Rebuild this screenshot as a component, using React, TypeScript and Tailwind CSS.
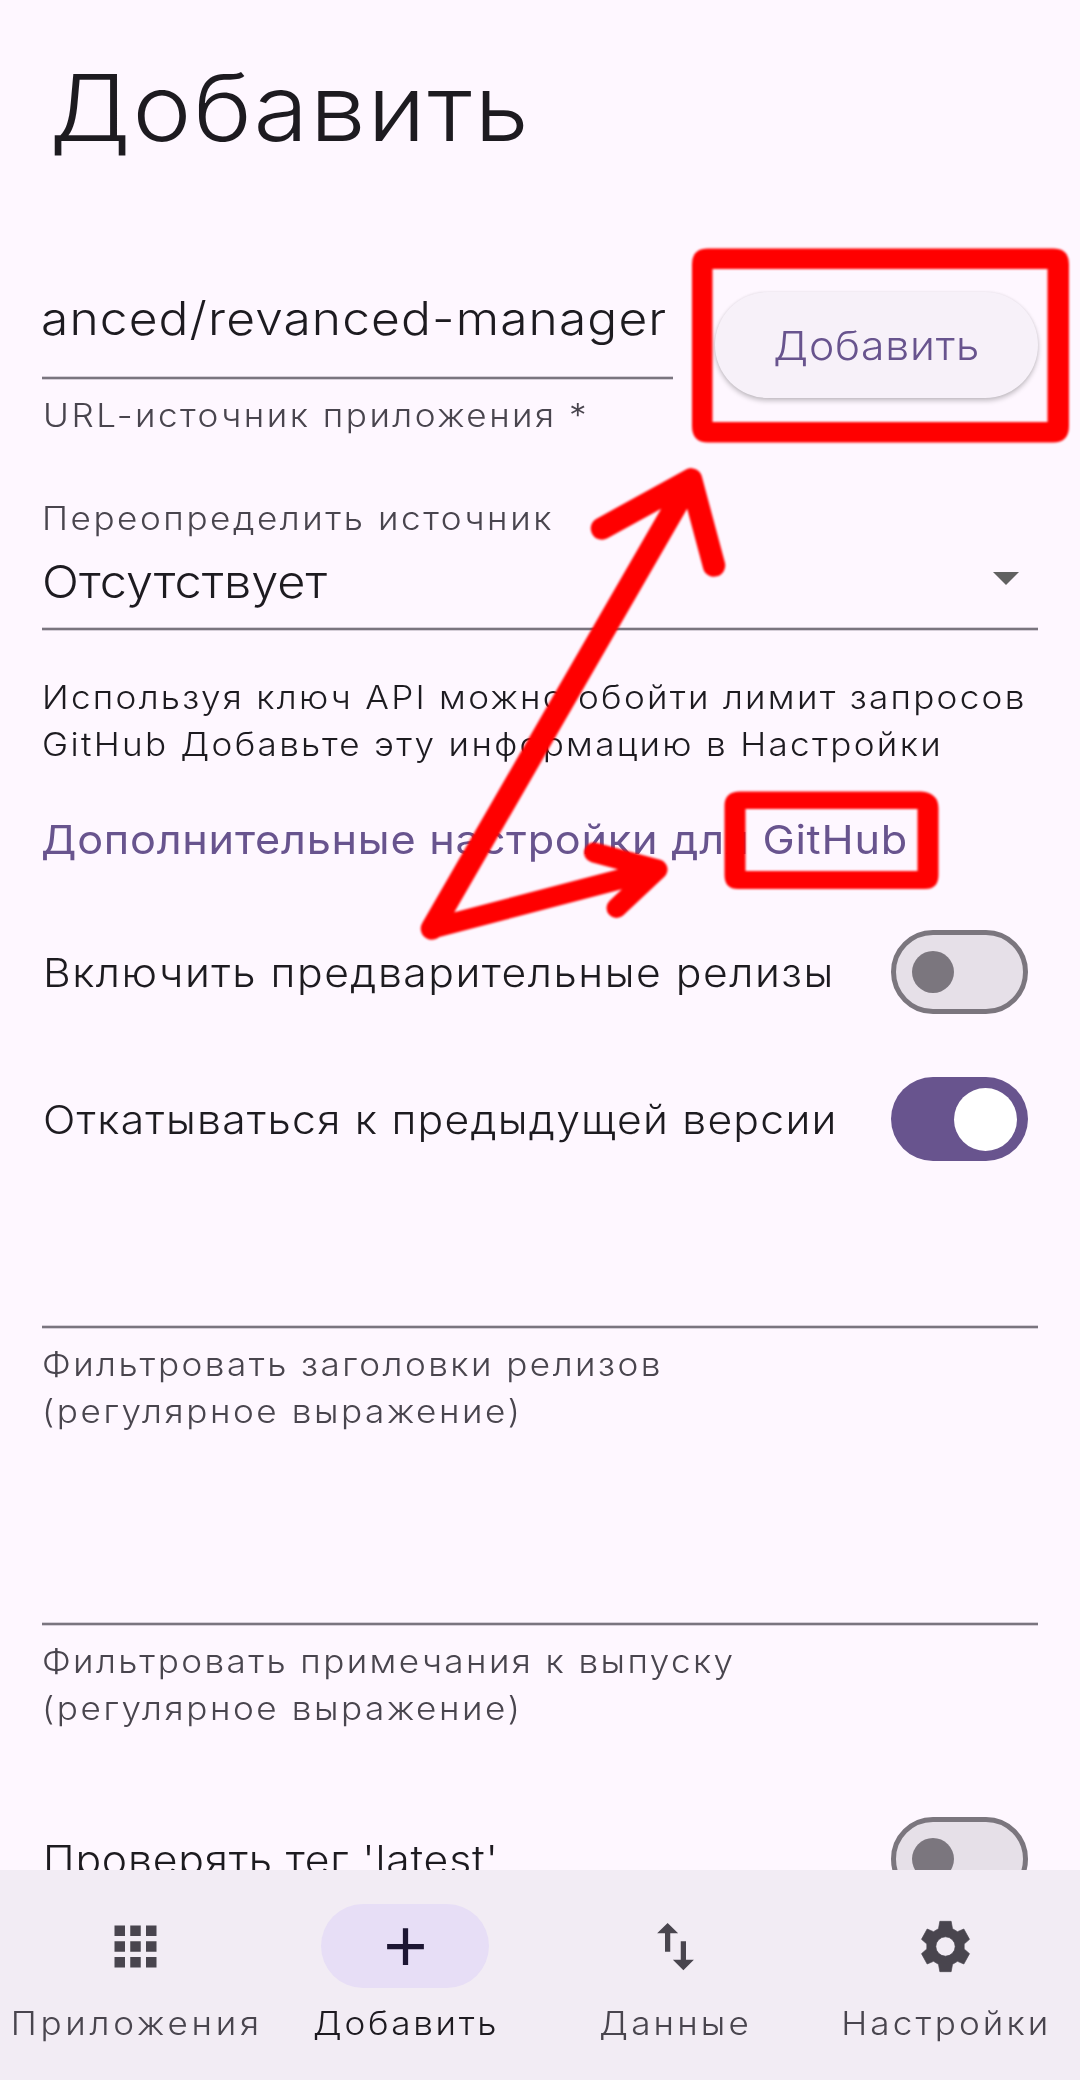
import React from "react";
import { MdAdd, MdApps, MdImportExport } from "react-icons/md";

function Underline() {
  return <div className="h-1 w-full border-y border-[#d5ced8] bg-[#7a757f]" />;
}

function Helper({ children, className }: { children: React.ReactNode; className: string }) {
  return (
    <p className={`origin-left scale-x-[1.08] text-[32.5px] leading-[47px] whitespace-nowrap text-[#49454e] ${className}`}>{children}</p>
  );
}

function Toggle({ on }: { on?: boolean }) {
  return on ? (
    <div className="flex h-[84px] w-[137px] shrink-0 items-center justify-end rounded-full bg-[#68548e] pr-[11px]">
      <div className="size-[63px] rounded-full bg-white" />
    </div>
  ) : (
    <div className="flex h-[84px] w-[137px] shrink-0 items-center rounded-full border-[5px] border-[#7b767e] bg-[#e6e0e8] pl-4">
      <div className="size-[42px] rounded-full bg-[#7b767e]" />
    </div>
  );
}

function SwitchRow({ label, on, className, spacing }: { label: string; on?: boolean; className: string; spacing: string }) {
  return (
    <div className={`flex h-[84px] items-center justify-between pr-[10px] pl-[1px] ${className}`}>
      <span className={`origin-left scale-x-[1.08] pt-[1px] text-[39.5px] leading-[50px] whitespace-nowrap ${spacing}`}>{label}</span>
      <Toggle on={on} />
    </div>
  );
}

function Gear() {
  return (
    <svg className="size-[63px]" viewBox="40.5 30 189 189" fill="currentColor" stroke="currentColor" strokeWidth="2" strokeLinejoin="round">
      <path
        fillRule="evenodd"
        d="M118 49H152L156 71L171 80L190 72L207 103L191 117V132L207 146L190 177L171 169L156 178L152 200H118L114 178L99 169L80 177L63 146L79 132V117L63 103L80 72L99 80L114 71ZM135 95.500A29 29 0 1 0 135 153.500A29 29 0 1 0 135 95.500Z"
      />
    </svg>
  );
}

function NavItem({ icon, label, active, spacing }: { icon: React.ReactNode; label: string; active?: boolean; spacing: string }) {
  return (
    <button className={active ? "flex flex-col items-center text-[#1d1a20]" : "flex flex-col items-center text-[#49454e]"}>
      <span className={active ? "flex h-[84px] w-[168px] items-center justify-center rounded-full bg-[#e7def6] text-[#1d1633]" : "flex h-[84px] w-[168px] items-center justify-center"}>
        {icon}
      </span>
      <span className={`mt-3 scale-x-[1.08] text-[32.5px] leading-[47px] whitespace-nowrap ${spacing}`}>{label}</span>
    </button>
  );
}

function Annotations() {
  return (
    <svg className="pointer-events-none absolute inset-0 h-[2080px] w-[1080px]" viewBox="0 0 1080 2080" fill="none">
      <defs>
        <filter id="soft" filterUnits="userSpaceOnUse" x="0" y="0" width="1080" height="2080">
          <feGaussianBlur stdDeviation="1.2" />
        </filter>
      </defs>
      <g filter="url(#soft)">
        <path
          fill="#ff0000"
          fillRule="evenodd"
          d="M708 248.500H1053Q1069 248.500 1069 264V426Q1069 442.500 1053 442.500H708Q692 442.500 692 426V264Q692 248.500 708 248.500ZM712.500 269V422H1047.500V269Z"
        />
        <path
          fill="#ff0000"
          fillRule="evenodd"
          d="M740 791.500H921Q938.500 793 938.500 808V875Q938.500 889 925 889H738Q724.500 889 724.500 875V806Q724.500 791.500 740 791.500ZM745.500 809V871H917.500V809Z"
        />
        <g stroke="#ff0000" strokeLinecap="round" strokeLinejoin="round">
          <path strokeWidth="22.500" d="M432 928.500L691 479.500M602 528.500L691 479.500L714 565.500" />
          <path strokeWidth="20" d="M432 928.500L657.500 869.500M594 852.500L657.500 869.500L616.500 908" />
        </g>
      </g>
    </svg>
  );
}

export default function App() {
  return (
    <div className="relative flex h-[2080px] w-[1080px] flex-col overflow-hidden bg-[#fef7ff] font-['Inter',sans-serif] font-light text-[#1d1b20]">
      <main className="flex h-[1870px] flex-col overflow-hidden px-[42px] pt-[58px]">
        <h1 className="origin-left scale-x-[1.08] pl-[7px] text-[92px] leading-[100px] tracking-[1.77px]">Добавить</h1>

        <section className="mt-[132px] flex items-start justify-between">
          <div className="w-[631px]">
            <div className="-ml-[1px] origin-left scale-x-[1.08] text-[46px] leading-[56px] tracking-[1.04px] whitespace-nowrap">anced/revanced-manager</div>
            <div className="mt-[30px]">
              <Underline />
            </div>
            <Helper className="mt-3 pl-[1px] tracking-[2.3px]">URL-источник приложения *</Helper>
          </div>
          <button className="mt-[2px] flex h-[106px] w-[323px] items-center justify-center rounded-full bg-[#f7f1f9] pt-1 text-[39.5px] tracking-[0.77px] text-[#68548e] shadow-[0_3px_5px_rgba(0,0,0,0.22),0_0_3px_rgba(0,0,0,0.08)]">
            <span className="scale-x-[1.08]">Добавить</span>
          </button>
        </section>

        <section className="mt-14">
          <Helper className="tracking-[2.36px]">Переопределить источник</Helper>
          <div className="mt-3 flex h-14 items-center justify-between pr-[19px]">
            <span className="origin-left scale-x-[1.08] text-[45px] leading-[56px] tracking-[0.03px]">Отсутствует</span>
            <svg className="mb-2 h-[13px] w-[26px]" viewBox="0 0 26 13">
              <path d="M0 0H26L13 13Z" fill="#616161" />
            </svg>
          </div>
          <div className="mt-[17px]">
            <Underline />
          </div>
        </section>

        <p className="mt-[43px] origin-left scale-x-[1.08] text-[32.5px] leading-[47px] whitespace-nowrap">
          <span className="block tracking-[2.1px]">Используя ключ API можно обойти лимит запросов</span>
          <span className="block tracking-[2.14px]">GitHub Добавьте эту информацию в Настройки</span>
        </p>

        <h2 className="mt-[47px] -ml-[1px] origin-left scale-x-[1.08] text-[40px] leading-[50px] font-normal tracking-[0.71px] whitespace-nowrap text-[#68548e]">
          Дополнительные настройки для GitHub
        </h2>

        <SwitchRow className="mt-[65px]" spacing="tracking-[1.39px]" label="Включить предварительные релизы" />
        <SwitchRow className="mt-[63px]" spacing="tracking-[1.15px]" label="Откатываться к предыдущей версии" on />

        <div className="mt-[164px]">
          <Underline />
        </div>
        <Helper className="mt-3 tracking-[2.28px]">
          Фильтровать заголовки релизов
          <br />
          <span className="tracking-[2.38px]">(регулярное выражение)</span>
        </Helper>

        <div className="mt-[187px]">
          <Underline />
        </div>
        <Helper className="mt-3 tracking-[2.22px]">
          Фильтровать примечания к выпуску
          <br />
          <span className="tracking-[2.38px]">(регулярное выражение)</span>
        </Helper>

        <SwitchRow className="mt-[85px] shrink-0" spacing="tracking-[0.74px]" label="Проверять тег 'latest'" />
      </main>

      <nav className="grid h-[210px] shrink-0 grid-cols-4 items-start bg-[#f2ecf4] pt-[34px]">
        <NavItem icon={<MdApps className="size-[63px]" />} label="Приложения" spacing="tracking-[3.5px] -mr-[3px]" />
        <NavItem icon={<MdAdd className="size-[63px]" />} label="Добавить" active spacing="tracking-[2.49px] -mr-[2px]" />
        <NavItem icon={<MdImportExport className="size-[63px]" />} label="Данные" spacing="tracking-[2.9px] -mr-[1px]" />
        <NavItem icon={<Gear />} label="Настройки" spacing="tracking-[2.91px] -mr-[2px]" />
      </nav>

      <Annotations />
    </div>
  );
}
